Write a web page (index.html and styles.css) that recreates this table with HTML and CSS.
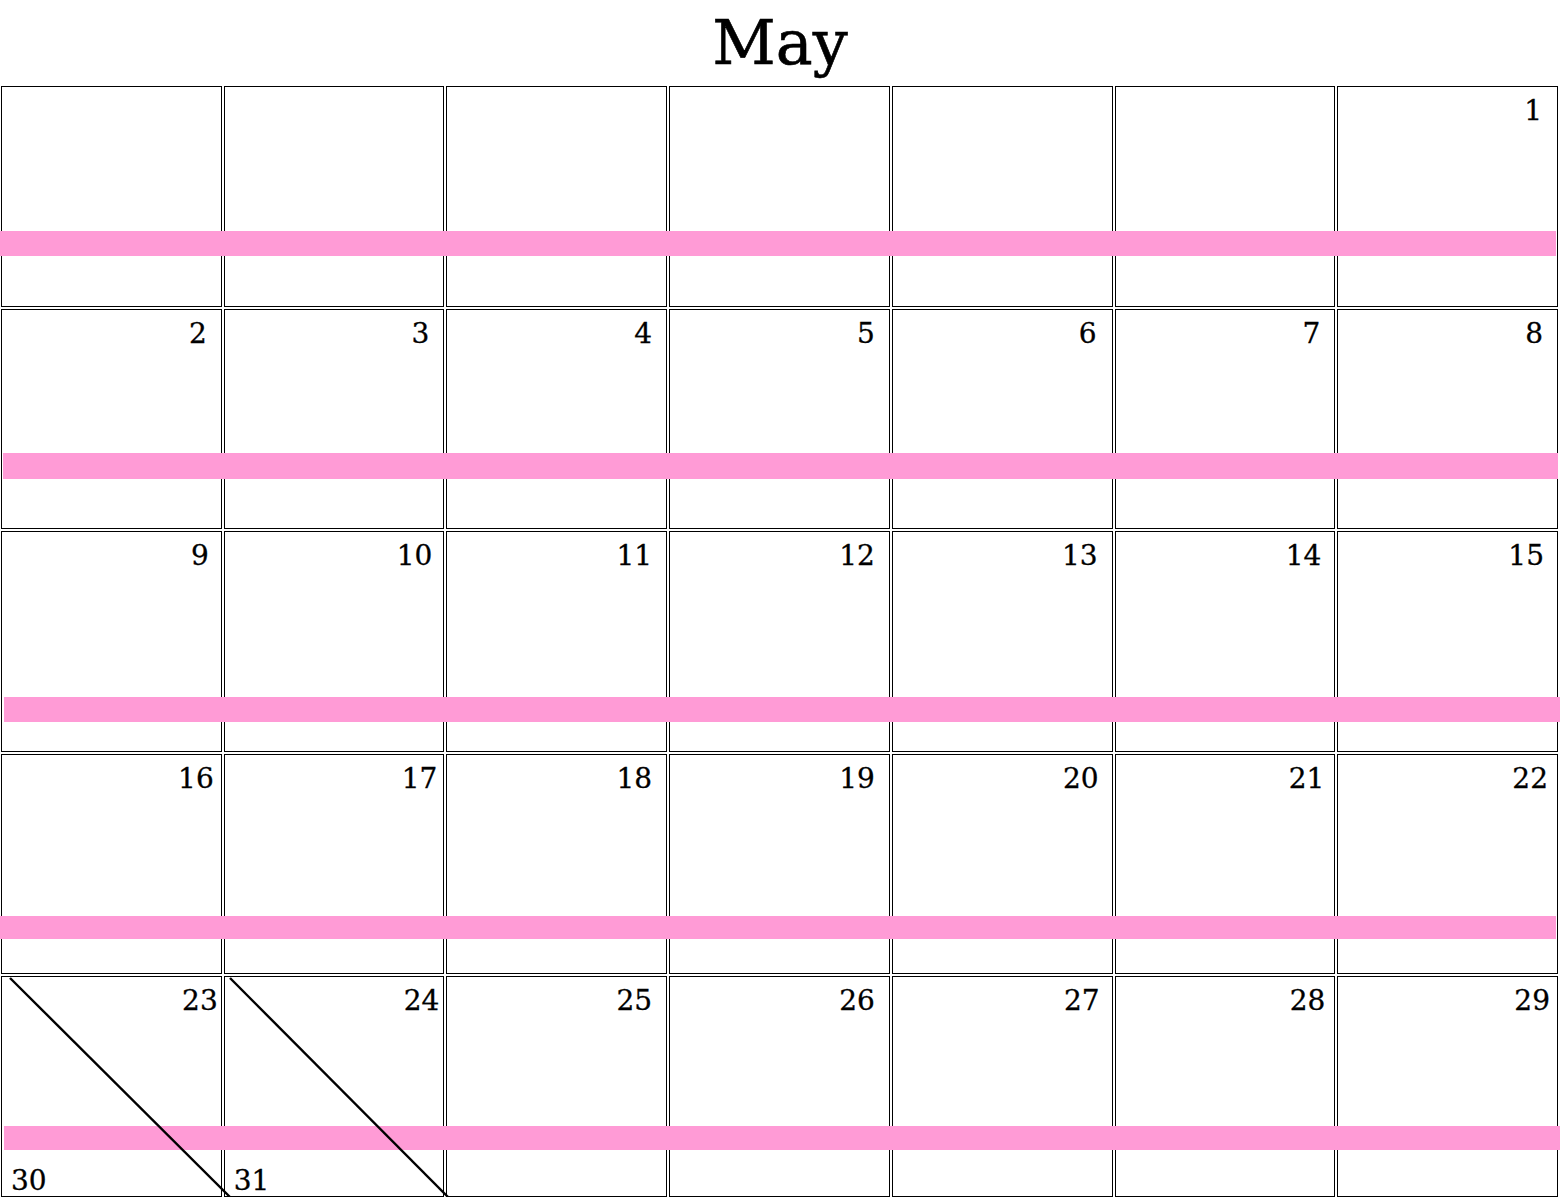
FILE: index.html
```html
<!DOCTYPE html>
<html lang="en">
<head>
<meta charset="utf-8">
<title>May</title>
<link rel="stylesheet" href="styles.css">
</head>
<body>
<h1 class="title">May</h1>
<div class="calendar">
  <div class="week">
    <div class="day"></div>
    <div class="day"></div>
    <div class="day"></div>
    <div class="day"></div>
    <div class="day"></div>
    <div class="day"></div>
    <div class="day r-1"><span class="num">1</span></div>
    <div class="bar bar-1"></div>
  </div>
  <div class="week">
    <div class="day"><span class="num">2</span></div>
    <div class="day"><span class="num">3</span></div>
    <div class="day"><span class="num">4</span></div>
    <div class="day"><span class="num">5</span></div>
    <div class="day r-1"><span class="num">6</span></div>
    <div class="day"><span class="num">7</span></div>
    <div class="day"><span class="num">8</span></div>
    <div class="bar bar-2"></div>
  </div>
  <div class="week">
    <div class="day r2"><span class="num">9</span></div>
    <div class="day r3"><span class="num">10</span></div>
    <div class="day"><span class="num">11</span></div>
    <div class="day"><span class="num">12</span></div>
    <div class="day"><span class="num">13</span></div>
    <div class="day r1"><span class="num">14</span></div>
    <div class="day r1"><span class="num">15</span></div>
    <div class="bar bar-3"></div>
  </div>
  <div class="week">
    <div class="day r7"><span class="num">16</span></div>
    <div class="day r8"><span class="num">17</span></div>
    <div class="day"><span class="num">18</span></div>
    <div class="day"><span class="num">19</span></div>
    <div class="day r1"><span class="num">20</span></div>
    <div class="day r4"><span class="num">21</span></div>
    <div class="day r5"><span class="num">22</span></div>
    <div class="bar bar-4"></div>
  </div>
  <div class="week">
    <div class="day split r11">
      <span class="num">23</span>
      <span class="num num-low">30</span>
      <svg class="slash" width="232" height="222" viewBox="0 0 232 222"><line x1="8" y1="1" x2="228" y2="220" stroke="#000" stroke-width="2.4"/></svg>
    </div>
    <div class="day split r10">
      <span class="num">24</span>
      <span class="num num-low">31</span>
      <svg class="slash" width="232" height="222" viewBox="0 0 232 222"><line x1="5" y1="1" x2="223" y2="220" stroke="#000" stroke-width="2.4"/></svg>
    </div>
    <div class="day"><span class="num">25</span></div>
    <div class="day"><span class="num">26</span></div>
    <div class="day r2"><span class="num">27</span></div>
    <div class="day r5"><span class="num">28</span></div>
    <div class="day r7"><span class="num">29</span></div>
    <div class="bar bar-5"></div>
  </div>
</div>
</body>
</html>
```

FILE: styles.css
```css
html, body {
  margin: 0;
  padding: 0;
  background: #fff;
}

body {
  font-family: "DejaVu Serif", serif;
  color: #000;
  width: 1560px;
  overflow: hidden;
}

.title {
  margin: 0;
  height: 86px;
  line-height: 86px;
  font-size: 62px;
  font-weight: normal;
  text-align: center;
  -webkit-text-stroke: 0.6px #000;
}

.calendar {
  margin-left: 1px;
  width: 1557px;
  height: 1111px;
  display: flex;
  flex-direction: column;
  gap: 2px;
}

.week {
  position: relative;
  flex: 1 1 0;
  display: grid;
  grid-template-columns: repeat(7, 1fr);
  gap: 2px;
}

.day {
  position: relative;
  border: 1px solid #000;
  display: flex;
  flex-direction: column;
  padding: 8px 14px 0 9px;
}

.day.r-1 { padding-right: 15px; }
.day.r1 { padding-right: 13px; }
.day.r2 { padding-right: 12px; }
.day.r3 { padding-right: 11px; }
.day.r4 { padding-right: 10px; }
.day.r5 { padding-right: 9px; }
.day.r7 { padding-right: 7px; }
.day.r8 { padding-right: 6px; }
.day.r10 { padding-right: 4px; }
.day.r11 { padding-right: 3px; }

.num {
  font-size: 28px;
  line-height: 1.164;
  text-align: right;
  -webkit-text-stroke: 0.3px #000;
}

.num-low {
  margin-top: auto;
  margin-bottom: -2px;
  text-align: left;
}

.slash {
  position: absolute;
  left: 0;
  top: 0;
  z-index: 2;
  overflow: visible;
  pointer-events: none;
}

.bar {
  position: absolute;
  z-index: 1;
  background: #ff9bd6;
  height: 25px;
}

.bar-1 { left: -1px; width: 1556px; top: 145px; }
.bar-2 { left: 2px;  width: 1555px; top: 144px; height: 26px; }
.bar-3 { left: 3px;  width: 1556px; top: 166px; }
.bar-4 { left: -1px; width: 1556px; top: 162px; height: 23px; }
.bar-5 { left: 3px;  width: 1556px; top: 150px; height: 24px; }
```
